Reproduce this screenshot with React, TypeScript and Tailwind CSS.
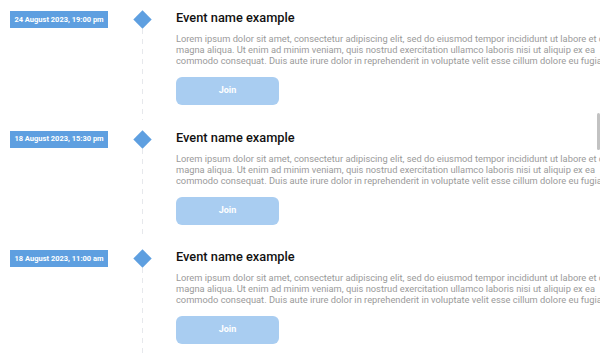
import React from "react";

const LOREM =
  "Lorem ipsum dolor sit amet, consectetur adipiscing elit, sed do eiusmod tempor incididunt ut labore et dolore magna aliqua. Ut enim ad minim veniam, quis nostrud exercitation ullamco laboris nisi ut aliquip ex ea commodo consequat. Duis aute irure dolor in reprehenderit in voluptate velit esse cillum dolore eu fugiat.";

const EVENTS = [
  { date: "24 August 2023, 19:00 pm", title: "Event name example" },
  { date: "18 August 2023, 15:30 pm", title: "Event name example" },
  { date: "18 August 2023, 11:00 am", title: "Event name example" },
];

export default function App() {
  return (
    <div className="relative w-[600px] h-[358px] overflow-hidden bg-white font-['Roboto',sans-serif]">
      {EVENTS.map((ev, i) => (
        <div key={i} className="flex h-[119.5px]">
          <div className="w-[124px] shrink-0 pl-[10px] pt-[11px]">
            <div className="w-[98px] h-[17px] bg-[#5e9fe0] text-white text-[7.5px] font-bold flex items-center justify-center">
              {ev.date}
            </div>
          </div>
          <div className="w-[36px] shrink-0 flex flex-col items-center pt-[13px]">
            <div className="w-[13px] h-[13px] bg-[#5e9fe0] rotate-45 shrink-0" />
            <div className="mt-[3px] w-px flex-1 bg-[repeating-linear-gradient(to_bottom,#e6e8ec_0_5px,transparent_5px_10px)]" />
          </div>
          <div className="ml-4 w-[460px] shrink-0 pt-[8px]">
            <h3 className="text-[12.8px] leading-[20px] font-medium text-[#111]">{ev.title}</h3>
            <p className="mt-[5px] text-[9.3px] leading-[11px] text-[#9a9a9a]">{LOREM}</p>
            <button className="mt-[11px] w-[103px] h-[28px] rounded-[6px] bg-[#a9cdf1] text-white text-[9px] font-bold">
              Join
            </button>
          </div>
        </div>
      ))}
      <div className="absolute right-0 top-[113px] w-[3px] h-[37px] bg-[#c2c2c2] rounded-full" />
    </div>
  );
}
